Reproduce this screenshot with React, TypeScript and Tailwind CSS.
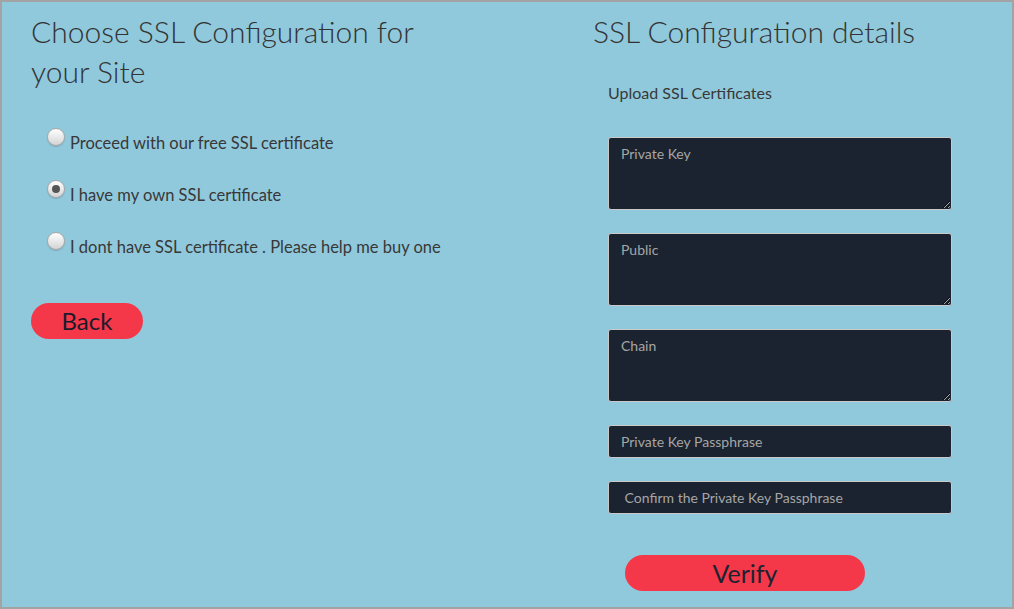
import React from 'react';

const font = { fontFamily: 'Lato, "Open Sans", sans-serif' };

const Radio = ({ checked, label }: { checked?: boolean; label: string }) => (
  <label className="flex items-start h-[20px]">
    <span className="mt-[-5px] w-[18px] h-[18px] rounded-full border border-[#a8a8a8] bg-gradient-to-b from-[#ffffff] to-[#d4d4d4] shadow-[0_1px_1px_rgba(0,0,0,0.15)] flex items-center justify-center shrink-0">
      {checked && <span className="w-[8px] h-[8px] rounded-full bg-[#555555]" />}
    </span>
    <span className="ml-[5px] text-[16.5px] leading-[20px] text-[#383838]">{label}</span>
  </label>
);

const Area = ({ placeholder }: { placeholder: string }) => (
  <textarea
    placeholder={placeholder}
    className="block w-[344px] h-[73px] rounded-[3px] border border-[#c9c9c9] bg-[#1b2330] px-[12px] py-[6px] text-[14px] leading-[20px] text-[#dddddd] placeholder:text-[#a6a6a6] outline-none"
  />
);

const Field = ({ placeholder }: { placeholder: string }) => (
  <input
    type="password"
    placeholder={placeholder}
    className="block w-[344px] h-[33px] rounded-[3px] border border-[#c9c9c9] bg-[#1b2330] px-[12px] text-[14px] text-[#dddddd] placeholder:text-[#a6a6a6] outline-none"
  />
);

export default function App() {
  return (
    <div style={font} className="w-[1014px] h-[609px] border-2 border-[#a3a3a3] bg-[#90c8dc] flex overflow-hidden">
      <section className="w-[591px] shrink-0 pl-[29px] pt-[9px]">
        <h1 className="text-[30px] leading-[40px] font-light text-[#333333]">
          Choose SSL Configuration for
          <br />
          your Site
        </h1>
        <div className="mt-[42px] pl-[16px] flex flex-col gap-[32px]">
          <Radio label="Proceed with our free SSL certificate" />
          <Radio checked label="I have my own SSL certificate" />
          <Radio label="I dont have SSL certificate . Please help me buy one" />
        </div>
        <button className="mt-[46px] w-[112px] h-[36px] rounded-full bg-[#f4384a] text-[24px] leading-[36px] text-[#1b1b2b]">
          Back
        </button>
      </section>
      <section className="flex-1 pt-[9px]">
        <h2 className="text-[30px] leading-[40px] font-light text-[#333333]">SSL Configuration details</h2>
        <div className="pl-[15px]">
          <p className="mt-[32px] text-[16px] leading-[20px] text-[#383838]">Upload SSL Certificates</p>
          <div className="mt-[34px] flex flex-col gap-[23px]">
            <Area placeholder="Private Key" />
            <Area placeholder="Public" />
            <Area placeholder="Chain" />
            <Field placeholder="Private Key Passphrase" />
            <Field placeholder=" Confirm the Private Key Passphrase" />
          </div>
          <button className="mt-[41px] ml-[17px] w-[240px] h-[36px] rounded-full bg-[#f4384a] text-[25px] leading-[36px] text-[#1b2330]">
            Verify
          </button>
        </div>
      </section>
    </div>
  );
}
